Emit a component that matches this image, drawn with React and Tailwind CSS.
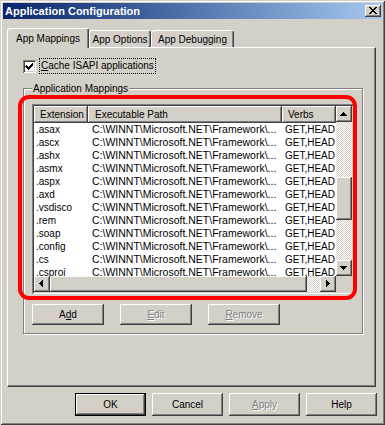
import React from "react";

const RAISED =
  "shadow-[inset_-1px_-1px_#404040,inset_1px_1px_#ffffff,inset_-2px_-2px_#808080,inset_2px_2px_#d4d0c8]";
const SUNKEN =
  "shadow-[inset_1px_1px_#808080,inset_-1px_-1px_#ffffff,inset_2px_2px_#404040,inset_-2px_-2px_#d4d0c8]";
const DITHER =
  "bg-[image:repeating-conic-gradient(#ffffff_0%_25%,#d4d0c8_0%_50%)] bg-[length:2px_2px]";

const rows = [
  ".asax",
  ".ascx",
  ".ashx",
  ".asmx",
  ".aspx",
  ".axd",
  ".vsdisco",
  ".rem",
  ".soap",
  ".config",
  ".cs",
  ".csproj",
];
const PATH = "C:\\WINNT\\Microsoft.NET\\Framework\\...";

function Arrow({ dir }) {
  const r = {
    up: [
      [7, 6, 1, 1],
      [6, 7, 3, 1],
      [5, 8, 5, 1],
      [4, 9, 7, 1],
    ],
    down: [
      [4, 6, 7, 1],
      [5, 7, 5, 1],
      [6, 8, 3, 1],
      [7, 9, 1, 1],
    ],
    left: [
      [5, 7, 1, 1],
      [6, 6, 1, 3],
      [7, 5, 1, 5],
      [8, 4, 1, 7],
    ],
    right: [
      [6, 4, 1, 7],
      [7, 5, 1, 5],
      [8, 6, 1, 3],
      [9, 7, 1, 1],
    ],
  }[dir];
  return (
    <div className={`w-[16px] h-[16px] bg-[#d4d0c8] ${RAISED}`}>
      <svg width="16" height="16" shapeRendering="crispEdges">
        {r.map(([x, y, w, h], i) => (
          <rect key={i} x={x} y={y} width={w} height={h} fill="#000" />
        ))}
      </svg>
    </div>
  );
}

function HeaderCell({ className, children }) {
  return (
    <div
      className={`h-[17px] leading-[17px] bg-[#d4d0c8] whitespace-nowrap overflow-hidden ${RAISED} ${className}`}
    >
      {children}
    </div>
  );
}

function Btn({ children, className = "", disabled, isDefault }) {
  const base = `flex items-center justify-center bg-[#d4d0c8] ${className}`;
  const txt = disabled
    ? "text-[#808080] [text-shadow:1px_1px_0_#ffffff]"
    : "text-black";
  if (isDefault) {
    return (
      <div className={`${base} border border-black`}>
        <div
          className={`w-full h-full flex items-center justify-center ${RAISED} ${txt}`}
        >
          {children}
        </div>
      </div>
    );
  }
  return <div className={`${base} ${RAISED} ${txt}`}>{children}</div>;
}

function Tab({ active, className = "", children }) {
  return (
    <div
      className={`flex items-start justify-center bg-[#d4d0c8] border-l border-t border-white border-r border-r-[#404040] rounded-t-[3px] shadow-[inset_-1px_0_#808080] whitespace-nowrap ${
        active
          ? "h-[20px] -mb-px relative z-10 pt-[2px]"
          : "h-[17px] pt-[1px]"
      } ${className}`}
    >
      {children}
    </div>
  );
}

export default function App() {
  return (
    <div className="relative w-[385px] h-[425px] overflow-hidden bg-[#d4d0c8] p-[3px] flex flex-col font-['Liberation_Sans',Arial,sans-serif] text-[10px] text-black shadow-[inset_1px_1px_#d4d0c8,inset_-1px_-1px_#404040,inset_2px_2px_#ffffff,inset_-2px_-2px_#808080]">
      {/* Title bar */}
      <div className="flex items-start justify-between h-[16px] bg-linear-to-r from-[#0a246a] to-[#a6caf0]">
        <div className="pl-[2px] leading-[16px] text-[11px] font-bold text-white whitespace-nowrap">
          Application Configuration
        </div>
        <div
          className={`mt-[2px] mr-[1px] w-[16px] h-[12px] bg-[#d4d0c8] ${RAISED}`}
        >
          <svg width="16" height="12" shapeRendering="crispEdges">
            <path
              d="M4 2h2v1h1v1h2v-1h1v-1h2v1h-1v1h-1v1h-1v1h1v1h1v1h1v1h-2v-1h-1v-1h-2v1h-1v1h-2v-1h1v-1h1v-1h1v-1h-1v-1h-1v-1h-1z"
              fill="#000"
            />
          </svg>
        </div>
      </div>

      {/* Tabs + panel */}
      <div className="pl-[4px] mt-[9px] flex flex-col">
        <div className="flex items-end h-[19px]">
          <Tab active className="w-[82px]">
            App Mappings
          </Tab>
          <Tab className="w-[62px]">App Options</Tab>
          <Tab className="w-[83px]">App Debugging</Tab>
        </div>
        <div className="w-[369px] h-[340px] border-l border-t border-white border-r border-b border-r-[#404040] border-b-[#404040] shadow-[inset_-1px_-1px_#808080] flex flex-col">
          {/* Checkbox */}
          <div className="flex items-center h-[16px] mt-[10px] pl-[15px]">
            <div
              className={`w-[13px] h-[13px] bg-white p-[2px] ${SUNKEN}`}
            >
              <svg width="9" height="9" shapeRendering="crispEdges">
                <path
                  d="M1 3h1v1h1v1h1v-1h1v-1h1v-1h1v-1h1v3h-1v1h-1v1h-1v1h-1v1h-1v-1h-1v-1h-1v-1h-1z"
                  fill="#000"
                />
              </svg>
            </div>
            <div className="ml-[3px] h-[16px] leading-[14px] border border-dotted border-black px-[1px] whitespace-nowrap">
              <u>C</u>ache ISAPI applications
            </div>
          </div>

          {/* Group box */}
          <fieldset className="mt-[8px] ml-[15px] w-[340px] border border-[#808080] shadow-[inset_1px_1px_#ffffff,1px_1px_#ffffff] pl-[8px] pt-[9px] pb-[8px]">
            <legend className="h-[13px] leading-[13px] px-[1px] bg-[#d4d0c8] whitespace-nowrap">
              Application Mappings
            </legend>
            {/* List view */}
            <div className={`w-[322px] h-[190px] p-[2px] bg-white ${SUNKEN}`}>
              <div className="grid grid-cols-[302px_16px] grid-rows-[170px_16px]">
                <div className="overflow-hidden bg-white">
                  <div className="flex">
                    <HeaderCell className="w-[54px] pl-[6px]">
                      Extension
                    </HeaderCell>
                    <HeaderCell className="w-[194px] pl-[7px]">
                      Executable Path
                    </HeaderCell>
                    <HeaderCell className="w-[54px] pl-[6px]">Verbs</HeaderCell>
                  </div>
                  {rows.map((r) => (
                    <div
                      key={r}
                      className="flex h-[13px] leading-[13px] whitespace-nowrap"
                    >
                      <div className="w-[54px] pl-[2px] overflow-hidden">{r}</div>
                      <div className="w-[194px] pl-[4px] overflow-hidden text-[10.5px]">
                        {PATH}
                      </div>
                      <div className="w-[54px] pl-[3px] overflow-hidden">
                        GET,HEAD
                      </div>
                    </div>
                  ))}
                </div>
                {/* Vertical scrollbar */}
                <div className="flex flex-col w-[16px] h-[170px]">
                  <Arrow dir="up" />
                  <div className={`flex-1 flex flex-col ${DITHER}`}>
                    <div
                      className={`mt-[55px] h-[43px] w-[16px] bg-[#d4d0c8] ${RAISED}`}
                    />
                  </div>
                  <Arrow dir="down" />
                </div>
                {/* Horizontal scrollbar */}
                <div className="flex h-[16px] w-[302px]">
                  <Arrow dir="left" />
                  <div className={`flex-1 flex ${DITHER}`}>
                    <div
                      className={`w-[257px] h-[16px] bg-[#d4d0c8] ${RAISED}`}
                    />
                  </div>
                  <Arrow dir="right" />
                </div>
                <div className="bg-[#d4d0c8]" />
              </div>
            </div>
            {/* Buttons */}
            <div className="flex gap-[16px] mt-[10px]">
              <Btn className="w-[72px] h-[21px]">
                A<u>d</u>d
              </Btn>
              <Btn disabled className="w-[72px] h-[21px]">
                <u>E</u>dit
              </Btn>
              <Btn disabled className="w-[72px] h-[21px]">
                <u>R</u>emove
              </Btn>
            </div>
          </fieldset>
        </div>
      </div>

      {/* Dialog buttons */}
      <div className="flex justify-end gap-[6px] pr-[5px] mt-[6px]">
        <Btn isDefault className="w-[71px] h-[23px]">
          OK
        </Btn>
        <Btn className="w-[71px] h-[23px]">Cancel</Btn>
        <Btn disabled className="w-[71px] h-[23px]">
          <u>A</u>pply
        </Btn>
        <Btn className="w-[71px] h-[23px]">Help</Btn>
      </div>

      {/* Red annotation overlay */}
      <div className="absolute left-[18px] top-[95px] w-[339px] h-[205px] border-4 border-[#ff0000] rounded-[11px] pointer-events-none" />
    </div>
  );
}
